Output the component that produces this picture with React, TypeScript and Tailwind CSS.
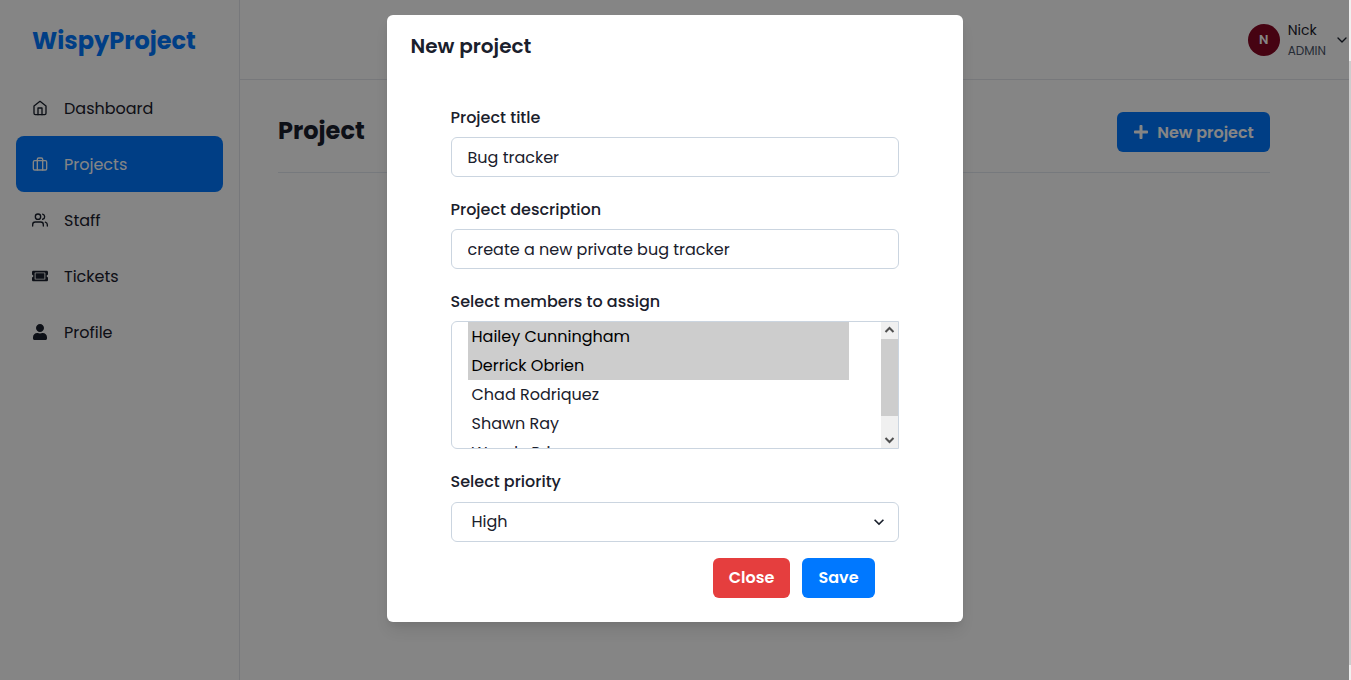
import type { ReactNode } from "react";
import { FiBriefcase, FiChevronDown, FiHome, FiUsers } from "react-icons/fi";
import { FaPlus, FaTicketAlt, FaUser } from "react-icons/fa";

const navItems = [
  { label: "Dashboard", Icon: FiHome },
  { label: "Projects", Icon: FiBriefcase, active: true },
  { label: "Staff", Icon: FiUsers },
  { label: "Tickets", Icon: FaTicketAlt },
  { label: "Profile", Icon: FaUser },
];

const members = [
  { name: "Hailey Cunningham", selected: true },
  { name: "Derrick Obrien", selected: true },
  { name: "Chad Rodriquez", selected: false },
  { name: "Shawn Ray", selected: false },
  { name: "Wendy Price", selected: false },
];

function Sidebar() {
  return (
    <aside className="flex w-60 shrink-0 flex-col border-r border-gray-200">
      <div className="flex h-20 items-center px-8 pt-0.5 text-2xl font-bold text-[#0078ff]">WispyProject</div>
      <nav className="flex flex-col px-4">
        {navItems.map(({ label, Icon, active }) => (
          <a
            key={label}
            className={
              active
                ? "flex h-14 items-center gap-4 rounded-lg bg-[#0078ff] px-4 text-white"
                : "flex h-14 items-center gap-4 px-4"
            }
          >
            <Icon size={16} />
            <span className="pt-0.5">{label}</span>
          </a>
        ))}
      </nav>
    </aside>
  );
}

function TopBar() {
  return (
    <header className="flex h-20 items-center justify-end border-b border-gray-200">
      <div className="flex items-center">
        <div className="flex size-8 items-center justify-center rounded-full bg-[#870724] text-[12.8px] font-semibold text-white">
          N
        </div>
        <div className="ml-2 flex flex-col pt-px">
          <span className="text-sm leading-[21px]">Nick</span>
          <span className="text-xs leading-[19px] text-[#4a5568]">ADMIN</span>
        </div>
        <FiChevronDown size={16} className="-mr-px ml-2" />
      </div>
    </header>
  );
}

function Field({ label, children }: { label: string; children: ReactNode }) {
  return (
    <div className="flex flex-col gap-[7px]">
      <label className="pt-px font-medium leading-6">{label}</label>
      {children}
    </div>
  );
}

function ScrollArrow({ up }: { up?: boolean }) {
  return (
    <svg viewBox="0 0 17 17" className="size-[17px]" fill="none" stroke="#505050" strokeWidth="2">
      <path d={up ? "M4.5 10l4-4 4 4" : "M4.5 7l4 4 4-4"} />
    </svg>
  );
}

function MemberList() {
  return (
    <div className="flex h-32 overflow-hidden rounded-l-md border border-[#cbd5e0]">
      <div className="flex flex-1 flex-col pl-4 pr-8">
        {members.map((m) => (
          <div
            key={m.name}
            className={
              m.selected
                ? "h-[29px] shrink-0 bg-[#cdcdcd] pl-1 leading-[29px] text-black"
                : "h-[29px] shrink-0 pl-1 leading-[29px]"
            }
          >
            {m.name}
          </div>
        ))}
      </div>
      <div className="flex w-[17px] flex-col bg-[#f0f0f0]">
        <ScrollArrow up />
        <div className="h-[77px] bg-[#cdcdcd]" />
        <div className="flex-1" />
        <ScrollArrow />
      </div>
    </div>
  );
}

function NewProjectModal() {
  return (
    <section className="flex h-[607px] w-[576px] flex-col rounded-md bg-white shadow-[0_10px_15px_-3px_rgba(0,0,0,0.1),0_4px_6px_-2px_rgba(0,0,0,0.05)]">
      <h2 className="px-6 py-4 text-xl font-semibold leading-[30px]">New project</h2>
      <form className="flex flex-col gap-5 px-16 pt-7">
        <Field label="Project title">
          <input
            defaultValue="Bug tracker"
            className="h-10 rounded-md border border-[#cbd5e0] px-4 outline-none"
          />
        </Field>
        <Field label="Project description">
          <input
            defaultValue="create a new private bug tracker"
            className="h-10 rounded-md border border-[#cbd5e0] px-4 outline-none"
          />
        </Field>
        <Field label="Select members to assign">
          <MemberList />
        </Field>
        <Field label="Select priority">
          <div className="mt-px flex h-10 items-center justify-between rounded-md border border-[#cbd5e0] pl-5 pr-[9px]">
            <span>High</span>
            <svg viewBox="0 0 24 24" className="size-5" fill="currentColor">
              <path d="M16.59 8.59L12 13.17 7.41 8.59 6 10l6 6 6-6z" />
            </svg>
          </div>
        </Field>
      </form>
      <footer className="flex justify-end gap-3 px-[88px] pt-4 font-semibold text-white">
        <button className="h-10 w-[77px] rounded-md bg-[#e53e3e] pl-px">Close</button>
        <button className="h-10 w-[73px] rounded-md bg-[#0078ff] pl-px">Save</button>
      </footer>
    </section>
  );
}

export default function App() {
  return (
    <div className="flex h-[680px] overflow-hidden bg-white font-[Poppins,Inter,sans-serif] text-base text-[#1a202c]">
      <div className="relative flex min-w-0 flex-1">
        <Sidebar />
        <div className="flex flex-1 flex-col">
          <TopBar />
          <main className="pl-[38px] pr-[79px] pt-8">
            <div className="flex items-start justify-between border-b border-[#e2e8f0] pb-5">
              <h1 className="text-2xl font-bold leading-[38px]">Project</h1>
              <button className="flex h-10 w-[153px] items-center justify-center gap-2 rounded-md bg-[#0078ff] font-semibold text-white">
                <FaPlus size={16} />
                <span className="pt-0.5">New project</span>
              </button>
            </div>
          </main>
        </div>
        <div className="absolute inset-0 flex items-start justify-center bg-black/48 pt-[15px]">
          <NewProjectModal />
        </div>
      </div>
      <div className="flex w-0.5 flex-col bg-[#f0f0f0] pt-[61px]">
        <div className="h-[604px] bg-[#cdcdcd]" />
      </div>
    </div>
  );
}
